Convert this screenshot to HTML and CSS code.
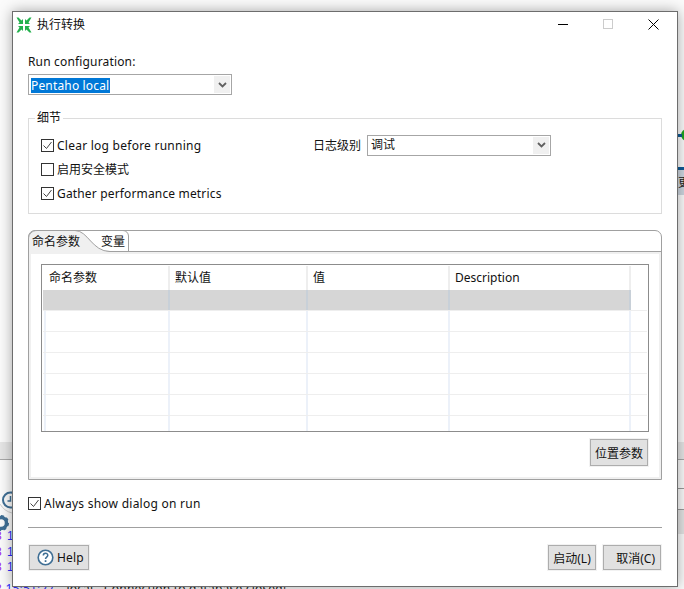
FILE: index.html
```html
<!DOCTYPE html>
<html lang="zh">
<head>
<meta charset="utf-8">
<title>执行转换</title>
<link rel="stylesheet" href="styles.css">
</head>
<body>
<div class="desktop">
  <div class="bg-band"></div>
  <div class="bg-line l1"></div>
  <div class="bg-row r2"></div>
  <div class="bg-row r3"></div>
  <div class="bg-dark"></div>
  <svg class="bg-clock" width="12" height="24" viewBox="0 0 12 24"><path d="M0 13Q4 20 12 22" fill="none" stroke="#cfcfcf"/><circle cx="10.500" cy="9" r="7.500" fill="none" stroke="#3f6f95" stroke-width="2"/><path d="M10.500 5v5H7.500" fill="none" stroke="#3f6f95" stroke-width="1.500"/></svg>
  <svg class="bg-gear" width="10" height="18" viewBox="0 0 10 18"><circle cx="1" cy="9" r="5.500" fill="none" stroke="#3f6f95" stroke-width="3.500"/><circle cx="1" cy="9" r="7.300" fill="none" stroke="#3f6f95" stroke-width="1.400" stroke-dasharray="3 2.700"/></svg>
  <div class="bg-log">
    <span><span class="purple">3</span> 1</span><span><span class="purple">3</span> 1</span><span><span class="purple">3</span> 1</span>
  </div>
  <div class="bg-logline"><span class="stamp"><span class="purple">3</span> 15:51:27</span><span>- local - Connection to database closed!</span></div>
  <div class="bg-node"></div>
  <div class="bg-wire w1"></div>
  <div class="bg-wire w2"></div>
  <div class="bg-label">更</div>

  <div class="dialog">
    <header class="titlebar">
      <div class="title">
        <svg class="app-icon" width="16" height="16" viewBox="0 0 16 16">
          <g fill="#23b14d">
            <path d="M0.500 0.500h2l3 3 1.500-1.500v5H2l1.500-1.500z"/>
            <path d="M15.500 0.500h-2l-3 3L9 2v5h5l-1.500-1.500z"/>
            <path d="M0.500 15.500h2l3-3L7 14V9H2l1.500 1.500z"/>
            <path d="M15.500 15.500h-2l-3-3L9 14V9h5l-1.500 1.500z"/>
          </g>
        </svg>
        <span>执行转换</span>
      </div>
      <div class="win-controls">
        <svg width="10" height="10" viewBox="0 0 10 10"><path d="M0 5.500h10" stroke="#000" fill="none"/></svg>
        <svg width="10" height="10" viewBox="0 0 10 10"><rect x="0.500" y="0.500" width="9" height="9" stroke="#ccc" fill="none"/></svg>
        <svg width="11" height="11" viewBox="0 0 11 11"><path d="M0.500 0.500l10 10M10.500 0.500l-10 10" stroke="#000" fill="none"/></svg>
      </div>
    </header>

    <main class="body">
      <label class="field-label latin">Run configuration:</label>
      <div class="combo run-combo">
        <span class="selected latin">Pentaho local</span>
        <span class="combo-btn"><svg width="9" height="6" viewBox="0 0 9 6"><path d="M1 1l3.500 3.500L8 1" stroke="#606060" stroke-width="1.800" fill="none"/></svg></span>
      </div>

      <fieldset class="group">
        <legend>细节</legend>
        <div class="group-grid">
          <div class="group-checks">
            <div class="check"><span class="box on"><svg width="11" height="11" viewBox="0 0 11 11"><path d="M1.500 5.500l3 3 5-6.500" stroke="#444" fill="none"/></svg></span><span class="latin wide">Clear log before running</span></div>
            <div class="check"><span class="box"></span>启用安全模式</div>
            <div class="check"><span class="box on"><svg width="11" height="11" viewBox="0 0 11 11"><path d="M1.500 5.500l3 3 5-6.500" stroke="#444" fill="none"/></svg></span><span class="latin">Gather performance metrics</span></div>
          </div>
          <div class="log-level">
            <span>日志级别</span>
            <div class="combo level-combo">
              <span class="value">调试</span>
              <span class="combo-btn"><svg width="9" height="6" viewBox="0 0 9 6"><path d="M1 1l3.500 3.500L8 1" stroke="#606060" stroke-width="1.800" fill="none"/></svg></span>
            </div>
          </div>
        </div>
      </fieldset>

      <section class="folder">
        <div class="tabs">
          <svg class="tab-shape" width="102" height="24" viewBox="0 0 102 24">
            <path d="M0.500 23V9C0.500 4 4 0.500 9 0.500H47C60 0.500 64 21.500 82 21.500V23z" fill="#f0f0f0"/>
            <path d="M0.500 23V9C0.500 4 4 0.500 9 0.500H47C60 0.500 64 21.500 82 21.500" fill="none" stroke="#a0a0a0"/>
            <path d="M47 0.500H95C98 0.500 100.500 3 100.500 6V21" fill="none" stroke="#a0a0a0"/>
          </svg>
          <span class="tab tab-a">命名参数</span>
          <span class="tab tab-b">变量</span>
        </div>
        <div class="folder-body">
          <div class="table">
            <div class="tr head">
              <div>命名参数</div><div>默认值</div><div>值</div><div>Description</div><div></div>
            </div>
            <div class="tr sel"><div></div><div></div><div></div><div></div><div></div></div>
            <div class="tr"><div></div><div></div><div></div><div></div><div></div></div>
            <div class="tr"><div></div><div></div><div></div><div></div><div></div></div>
            <div class="tr"><div></div><div></div><div></div><div></div><div></div></div>
            <div class="tr"><div></div><div></div><div></div><div></div><div></div></div>
            <div class="tr"><div></div><div></div><div></div><div></div><div></div></div>
            <div class="tr last"><div></div><div></div><div></div><div></div><div></div></div>
          </div>
          <div class="pos-row"><button class="btn pos-btn">位置参数</button></div>
        </div>
      </section>

      <div class="check always"><span class="box on"><svg width="11" height="11" viewBox="0 0 11 11"><path d="M1.500 5.500l3 3 5-6.500" stroke="#444" fill="none"/></svg></span><span class="latin wide">Always show dialog on run</span></div>
      <div class="separator"></div>

      <footer class="actions">
        <button class="btn help-btn">
          <svg width="17" height="17" viewBox="0 0 17 17"><circle cx="8.500" cy="8.500" r="7.300" fill="#fff" stroke="#3f6f95" stroke-width="1.600"/><path d="M6.300 6.500c0-3 4.500-3 4.500-.2 0 1.800-2.300 1.700-2.300 3.700" fill="none" stroke="#3f6f95" stroke-width="1.500"/><rect x="7.700" y="11.200" width="1.700" height="1.800" fill="#3f6f95"/></svg>
          <span class="latin">Help</span>
        </button>
        <div class="actions-right">
          <button class="btn run-btn">启动(L)</button>
          <button class="btn cancel-btn">取消(C)</button>
        </div>
      </footer>
    </main>
  </div>
</div>
</body>
</html>
```

FILE: styles.css
```css
* { box-sizing: border-box; }
html, body { margin: 0; padding: 0; }
body {
  font-family: "Noto Sans", "Noto Sans CJK SC", sans-serif;
  font-size: 12px;
  color: #111;
  background: #f5f5f5;
}
.latin { letter-spacing: .16px; }
.wide { letter-spacing: .25px; }
.desktop { position: relative; width: 684px; height: 589px; overflow: hidden; background: #fbfbfb; }

.bg-band { position: absolute; left: 0; top: 442px; width: 684px; height: 17px; background: #e6e6e6; }
.bg-line { position: absolute; left: 0; width: 684px; height: 1px; background: #a8a8a8; }
.l1 { top: 459px; }
.bg-clock { position: absolute; left: 0; top: 491px; }
.bg-gear { position: absolute; left: 0; top: 514px; }
.bg-log { position: absolute; left: -5px; top: 529px; display: flex; flex-direction: column; color: #2a2aff; font: 12px/15.500px "Liberation Sans", sans-serif; word-spacing: 2px; white-space: nowrap; }
.bg-logline { position: absolute; left: -5px; top: 580px; display: flex; font: 12px/18px "Noto Sans", sans-serif; color: #222; white-space: nowrap; letter-spacing: .2px; }
.stamp { width: 64px; color: #2a2aff; }
.purple { color: #a020f0; }
.bg-node { position: absolute; left: 681px; top: 129px; width: 12px; height: 12px; border-radius: 50%; background: #1ea51e; }
.bg-wire { position: absolute; left: 677px; height: 3px; background: #0f5a96; }
.w1 { top: 134px; width: 5px; }
.w2 { top: 167px; width: 7px; }
.bg-label { position: absolute; left: 677px; top: 170px; width: 7px; height: 25px; background: #cdd6df; overflow: hidden; line-height: 26px; padding-left: 1px; color: #222; }
.bg-row { position: absolute; left: 677px; width: 7px; height: 1px; background: #9a9a9a; }
.r2 { top: 488px; }
.r3 { top: 509px; }
.bg-dark { position: absolute; left: 677px; top: 510px; width: 7px; height: 24px; background: #e4e4e4; }

.dialog {
  position: absolute; left: 12px; top: 11px; width: 666px; height: 576px;
  background: #fff; border: 1px solid #6d6d6d;
  box-shadow: 0 0 13px rgba(0,0,0,.34);
  display: flex; flex-direction: column;
}
.titlebar { height: 26px; display: flex; justify-content: space-between; align-items: center; flex: none; }
.title { display: flex; align-items: center; gap: 5px; padding-left: 3px; }
.title span { font-size: 12px; line-height: 24px; }
.app-icon { display: block; }
.win-controls { display: flex; align-items: center; gap: 35px; padding-right: 18px; padding-bottom: 2px; }
.win-controls svg { display: block; }

.body { flex: 1; padding: 15px 15px 0; display: flex; flex-direction: column; min-height: 0; }
.field-label { display: block; line-height: 18px; height: 21px; }

.combo { display: flex; align-items: center; justify-content: space-between; background: #fff; border: 1px solid #a6a6a6; height: 21px; flex: none; }
.run-combo { width: 204px; padding: 0 1px 0 2px; }
.selected { background: #0078d7; color: #fff; line-height: 15px; height: 15px; padding: 0 1px 0 0; margin-top: 1px; }
.combo-btn { width: 16px; height: 17px; background: #f0f0f0; display: flex; align-items: center; justify-content: center; }

.group { margin: 16px 0 0; padding: 0; border: 1px solid #dcdcdc; height: 103px; width: 634px; flex: none; }
.group legend { margin-left: 6px; padding: 0 2px; line-height: 14px; font-size: 12px; }
.group-grid { display: flex; padding: 10px 0 0 12px; }
.group-checks { width: 272px; display: flex; flex-direction: column; gap: 4px; }
.check { display: flex; align-items: center; gap: 3px; height: 20px; white-space: nowrap; }
.box { width: 13px; height: 13px; border: 1px solid #333; display: flex; align-items: center; justify-content: center; flex: none; background: #fff; }
.box svg { display: block; }
.log-level { display: flex; align-items: center; gap: 6px; height: 20px; }
.level-combo { width: 184px; padding: 0 1px 0 3px; }
.value { line-height: 16px; }

.folder { margin-top: 16px; height: 250px; width: 634px; flex: none; border: 1px solid #a0a0a0; border-top-right-radius: 7px; border-top-left-radius: 7px; display: flex; flex-direction: column; }
.tabs { position: relative; height: 21px; flex: none; border-bottom: 1px solid #a0a0a0; display: flex; }
.tab-shape { position: absolute; left: -1px; top: -1px; }
.tab { position: relative; line-height: 21px; white-space: nowrap; }
.tab-a { margin-left: 3px; }
.tab-b { margin-left: 21px; }
.folder-body { flex: 1; border: 2px solid #f0f0f0; padding: 10px 10px 0; display: flex; flex-direction: column; }

.table { height: 168px; border: 1px solid #8c8c8c; padding: 1px; overflow: hidden; flex: none; }
.tr { display: grid; grid-template-columns: 127px 138px 142px 181px 1fr; height: 21px; border-bottom: 1px solid #eeeeee; }
.tr > div { border-right: 2px solid #ecf1f9; }
.tr > div:first-child { position: relative; }
.tr > div:first-child::before { content: ""; position: absolute; left: 1px; top: 0; bottom: 0; width: 2px; background: #ecf1f9; }
.tr > div:last-child { border-right: none; }
.head { height: 24px; border-bottom: none; }
.head > div { padding-left: 5px; line-height: 24px; border-right-color: #eeeeee; }
.head > div:first-child { padding-left: 6px; }
.head > div:first-child::before { display: none; }
.sel > div { background: #d6d6d6; border-right-color: #c8d0d8; }
.sel > div:first-child::before { display: none; }
.sel > div:last-child { background: transparent; }
.last { border-bottom: none; }

.pos-row { display: flex; justify-content: flex-end; margin-top: 7px; padding-right: 1px; }
.btn { font: inherit; color: #111; background: #e1e1e1; border: 1px solid #adadad; padding: 0; box-shadow: 0 0 0 1px #f2f2f2; display: flex; align-items: center; justify-content: center; }
.pos-btn { width: 58px; height: 27px; }

.check.always { margin-top: 14px; height: 19px; flex: none; }
.separator { height: 1px; background: #a0a0a0; margin-top: 14px; flex: none; }
.actions { display: flex; justify-content: space-between; margin-top: 17px; padding: 0 1px; }
.help-btn { width: 60px; height: 25px; gap: 3px; justify-content: flex-start; padding-left: 7px; }
.help-btn svg { display: block; flex: none; }
.actions-right { display: flex; gap: 7px; }
.run-btn { width: 48px; height: 25px; }
.cancel-btn { width: 58px; height: 25px; justify-content: flex-end; padding-right: 5px; }
```
